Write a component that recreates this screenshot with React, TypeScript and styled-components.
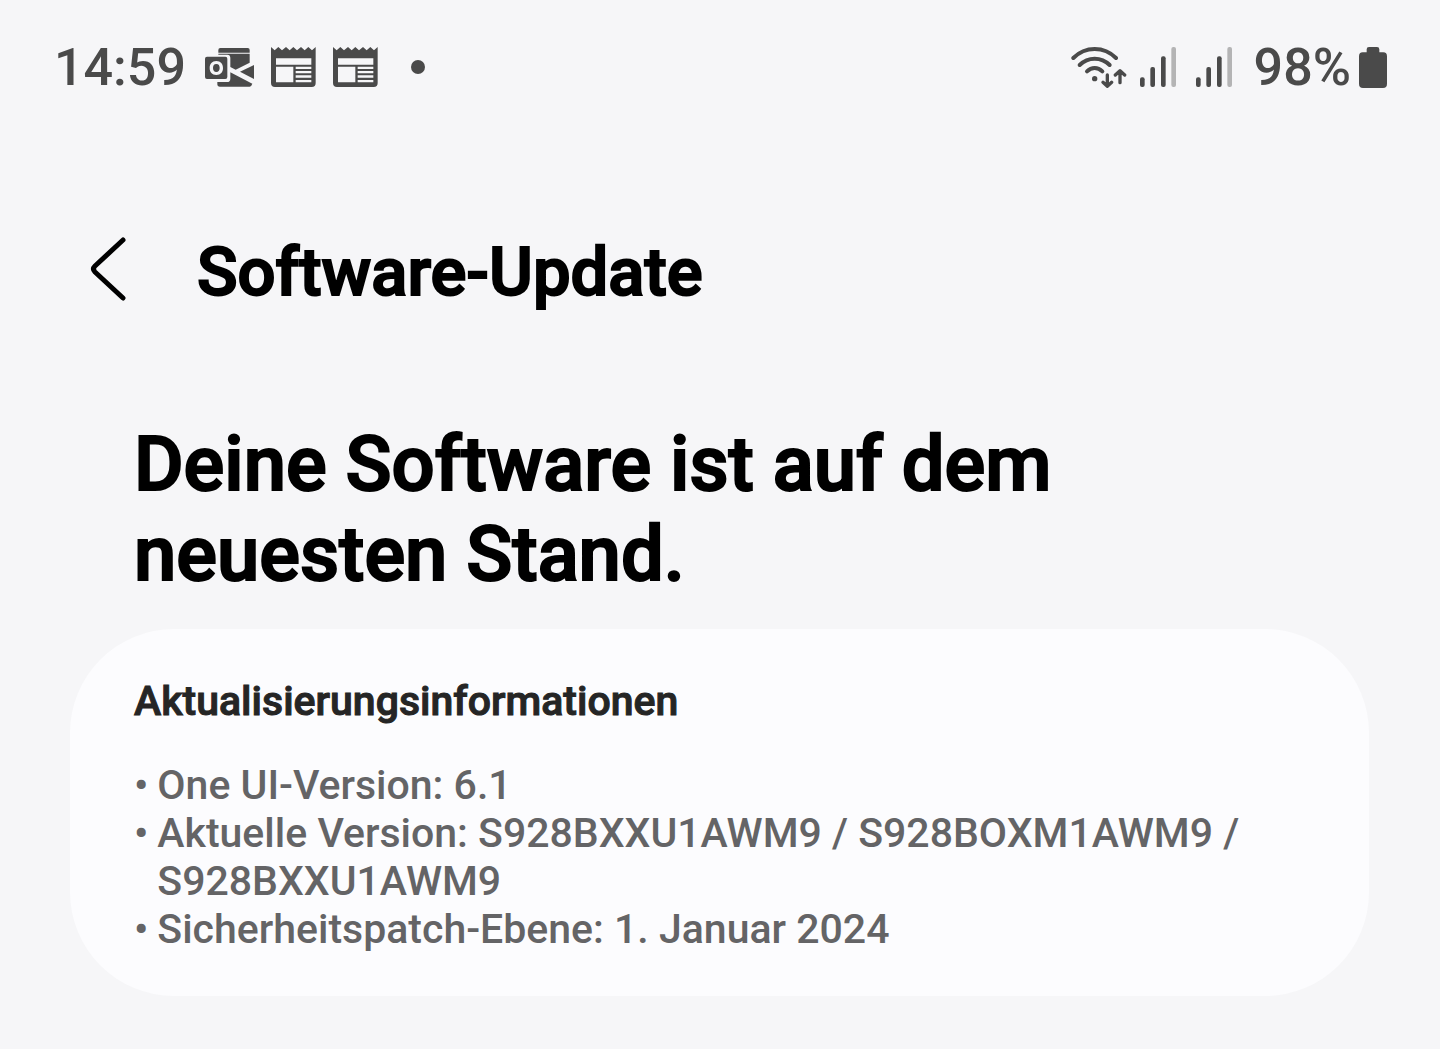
import React from "react";
import styled, { createGlobalStyle } from "styled-components";

const GlobalStyle = createGlobalStyle`
  * { box-sizing: border-box; }
  html { background: #f6f6f8; }
  body { margin: 0; font-family: Roboto, "Liberation Sans", sans-serif; color: #000; }
  h1, h2, h3, ul { margin: 0; padding: 0; }
`;

const Page = styled.div`
  display: flex;
  flex-direction: column;
  min-height: 100vh;
  background: #f6f6f8;
`;

const StatusBar = styled.header`
  display: flex;
  align-items: center;
  justify-content: space-between;
  height: 134px;
  padding: 0 53px 0 54px;
  color: #4a4a4a;
`;

const StatusGroup = styled.div<{ $gap: number }>`
  display: flex;
  align-items: center;
  gap: ${({ $gap }) => $gap}px;
`;

const StatusText = styled.span`
  padding-top: 2px;
  font-size: 52px;
  line-height: 60px;
  font-weight: 500;
`;

const Glyph = styled.svg<{ $width: number; $height: number }>`
  display: block;
  flex: none;
  width: ${({ $width }) => $width}px;
  height: ${({ $height }) => $height}px;
`;

const Dot = styled.span`
  width: 14px;
  height: 14px;
  margin-left: 16px;
  border-radius: 50%;
  background: currentColor;
`;

const TitleBar = styled.div`
  display: flex;
  align-items: center;
  gap: 69px;
  height: 270px;
  padding: 0 88px;
`;

const BackButton = styled.button`
  display: flex;
  padding: 0;
  border: 0;
  background: none;
  color: #000;
  cursor: pointer;
`;

const Title = styled.h1`
  padding-top: 6px;
  font-size: 67px;
  line-height: 80px;
  font-weight: 500;
  -webkit-text-stroke: 2px currentColor;
`;

const Main = styled.main`
  padding: 15px 71px 52px 70px;
`;

const Headline = styled.h2`
  max-width: 1100px;
  padding: 0 64px;
  font-size: 76px;
  line-height: 90px;
  font-weight: 500;
  -webkit-text-stroke: 2px currentColor;
`;

const Card = styled.section`
  margin-top: 30px;
  padding: 48px 64px 43px;
  border-radius: 104px;
  background: #fcfcfe;
`;

const CardTitle = styled.h3`
  color: #252525;
  font-size: 41px;
  line-height: 48px;
  font-weight: 500;
  -webkit-text-stroke: 1px currentColor;
`;

const InfoList = styled.ul`
  margin-top: 36px;
  list-style: none;
  color: #646466;
  font-size: 41px;
  line-height: 48px;
  font-weight: 500;
`;

const InfoItem = styled.li`
  display: flex;
  gap: 9px;
  &::before { content: "•"; }
`;

const OutlookIcon = () => (
  <Glyph $width={49} $height={39} viewBox="30 36 147 117" aria-hidden="true">
    <path fill="currentColor" d="M76 36h82q6 0 6 6v8H70v-8q0-6 6-6z" />
    <path fill="currentColor" d="M70 53h94v27l-42 21-16-8V66q0-10-9-10H70z" />
    <path fill="currentColor" d="M177 87v42l-42-22z" />
    <path fill="currentColor" d="M67 138h29q10 0 10-10v-19l66 34q-3 9-8 9H75q-8 0-8-7z" />
    <path
      fill="currentColor"
      fillRule="evenodd"
      d="M36 62h55q6 0 6 6v55q0 6-6 6H36q-6 0-6-6V68q0-6 6-6zm28 13c-13 0-20 9-20 21s7 21 20 21 20-9 20-21-7-21-20-21zm0 9c7 0 10 5 10 12s-3 12-10 12-10-5-10-12 3-12 10-12z"
    />
  </Glyph>
);

const NewsIcon = () => (
  <Glyph $width={45} $height={40} viewBox="225 38 135 120" aria-hidden="true">
    <path
      fill="currentColor"
      fillRule="evenodd"
      d="M225 38l11 10 11-10 11 10 12-10 11 10 11-10 11 10 12-10 11 10 11-10 11 10 11-10v108q0 12-12 12H237q-12 0-12-12zM240 72v19h106V72zM240 97v47h52V97zM299 97v7h47v-7zM299 110v7h47v-7zM299 123v7h47v-7zM299 137v7h47v-7z"
    />
  </Glyph>
);

const WifiIcon = () => (
  <Glyph $width={56} $height={41} viewBox="34 36 168 123" aria-hidden="true">
    <g fill="none" stroke="currentColor" strokeWidth="12" strokeLinecap="round" strokeLinejoin="round">
      <path d="M41 69Q68 42 105 42T169 69" />
      <path d="M60 90Q79 71 105 71T150 90" />
      <path d="M82 109Q92 99 105 99T128 109" />
      <path strokeWidth="10" d="M143 120v33M130 142l13 12 13-12M181 143v-35M167 120l14-13 14 13" />
    </g>
    <circle cx="105" cy="131" r="8" fill="currentColor" />
  </Glyph>
);

const SignalIcon = () => (
  <Glyph $width={36} $height={40} viewBox="240 38 108 120" aria-hidden="true">
    <g fill="currentColor">
      <rect x="240" y="129" width="14" height="29" rx="6" />
      <rect x="271" y="98" width="14" height="60" rx="6" />
      <rect x="303" y="66" width="14" height="92" rx="6" />
      <rect x="334" y="38" width="14" height="120" rx="6" fill="#b4b4b5" />
    </g>
  </Glyph>
);

const BatteryIcon = () => (
  <Glyph $width={28} $height={41} viewBox="357 36 84 123" aria-hidden="true">
    <path
      fill="currentColor"
      d="M387 36h24q7 0 7 7v9h12q11 0 11 12v82q0 13-12 13h-60q-12 0-12-13V64q0-12 11-12h12v-9q0-7 7-7z"
    />
  </Glyph>
);

const BackIcon = () => (
  <Glyph $width={40} $height={66} viewBox="0 0 40 66" aria-hidden="true">
    <path
      d="M35 4L7 30q-3 3 0 6L35 62"
      fill="none"
      stroke="currentColor"
      strokeWidth="5"
      strokeLinecap="round"
      strokeLinejoin="round"
    />
  </Glyph>
);

const details = [
  "One UI-Version: 6.1",
  "Aktuelle Version: S928BXXU1AWM9 / S928BOXM1AWM9 / S928BXXU1AWM9",
  "Sicherheitspatch-Ebene: 1. Januar 2024",
];

export default function App() {
  return (
    <Page>
      <GlobalStyle />
      <StatusBar>
        <StatusGroup $gap={19}>
          <StatusText>14:59</StatusText>
          <StatusGroup $gap={17}>
            <OutlookIcon />
            <NewsIcon />
            <NewsIcon />
            <Dot />
          </StatusGroup>
        </StatusGroup>
        <StatusGroup $gap={22}>
          <StatusGroup $gap={20}>
            <StatusGroup $gap={13}>
              <WifiIcon />
              <SignalIcon />
            </StatusGroup>
            <SignalIcon />
          </StatusGroup>
          <StatusGroup $gap={8}>
            <StatusText>98%</StatusText>
            <BatteryIcon />
          </StatusGroup>
        </StatusGroup>
      </StatusBar>
      <TitleBar>
        <BackButton type="button" aria-label="Zurück">
          <BackIcon />
        </BackButton>
        <Title>Software-Update</Title>
      </TitleBar>
      <Main>
        <Headline>Deine Software ist auf dem neuesten Stand.</Headline>
        <Card>
          <CardTitle>Aktualisierungsinformationen</CardTitle>
          <InfoList>
            {details.map((detail) => (
              <InfoItem key={detail}>{detail}</InfoItem>
            ))}
          </InfoList>
        </Card>
      </Main>
    </Page>
  );
}
